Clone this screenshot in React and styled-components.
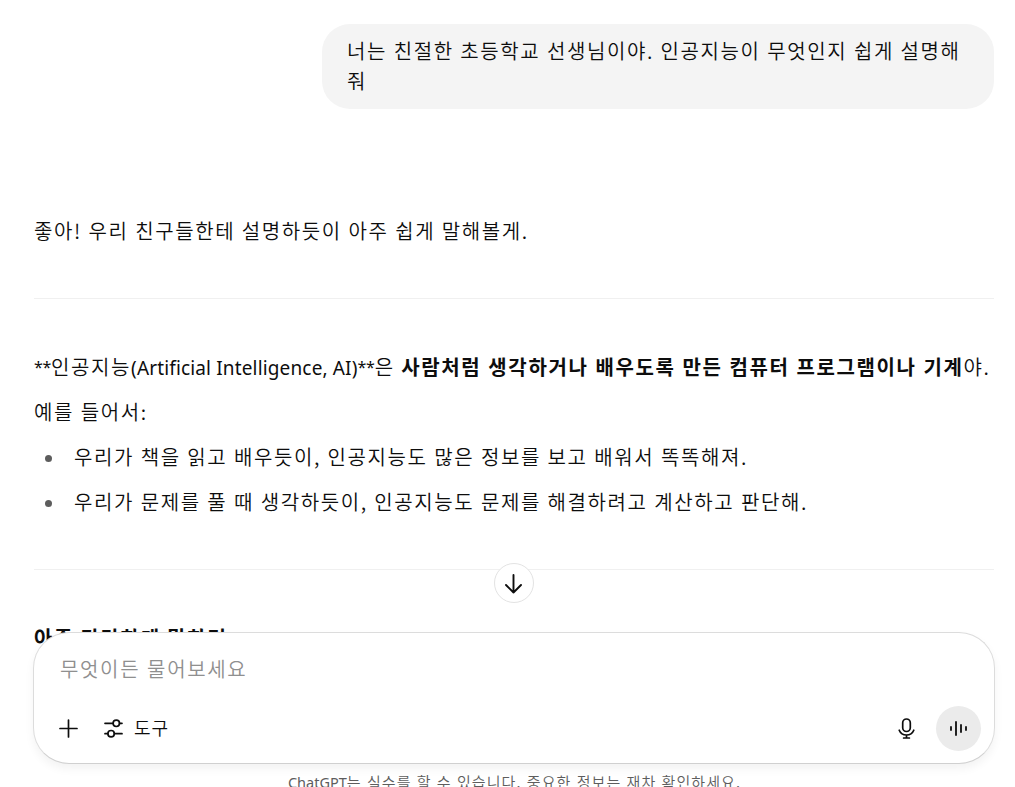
import React from 'react'
import styled, { createGlobalStyle } from 'styled-components'

const GlobalStyle = createGlobalStyle`
  * {
    box-sizing: border-box;
  }
  body {
    margin: 0;
    background: #fff;
    color: #0d0d0d;
    font-family: 'Noto Sans CJK KR', sans-serif;
    overflow: hidden;
  }
`
const Page = styled.div`
  position: relative;
  height: 100vh;
  overflow: hidden;
`
const Thread = styled.main`
  display: flex;
  flex-direction: column;
  padding: 24px 21px 0 34px;
  font-size: 20px;
  font-weight: 350;
  letter-spacing: 1.6px;
  word-spacing: 0.6px;
`
const Bubble = styled.div`
  align-self: flex-end;
  width: 672px;
  padding: 12px 25px 13px;
  border-radius: 28px;
  background: #f4f4f4;
  line-height: 30px;
  word-break: break-all;
`
const Answer = styled.article`
  display: flex;
  flex-direction: column;
  margin-top: 104px;
  line-height: 35px;
  white-space: nowrap;
`
const Text = styled.p`
  margin: ${props => props.$top || 0}px 0 0;
`
const Latin = styled.span`
  font-family: 'Noto Sans', sans-serif;
  font-weight: 400;
  font-size: 19px;
  letter-spacing: ${props => props.$spacing || 0}px;
  word-spacing: 0;
`
const Stars = styled(Latin)`
  font-size: 16px;
  line-height: 1;
  vertical-align: 2px;
  letter-spacing: -0.3px;
`
const Strong = styled.strong`
  font-weight: 700;
  letter-spacing: 1.62px;
  word-spacing: 0.8px;
`
const Rule = styled.hr`
  width: 100%;
  height: 1px;
  margin: 50px 0;
  border: 0;
  background: #f0f0f0;
`
const List = styled.ul`
  display: flex;
  flex-direction: column;
  gap: 10px;
  margin: 10px 0 0;
  padding: 0;
  list-style: none;
`
const Item = styled.li`
  display: flex;
  align-items: center;
  gap: 22px;
  padding-left: 11px;

  &::before {
    content: '';
    width: 7px;
    height: 7px;
    margin-top: 3px;
    border-radius: 50%;
    background: #5d5d5d;
  }
`
const Heading = styled.h3`
  margin: 0;
  font-size: 20px;
  font-weight: 700;
`
const ScrollButton = styled.button`
  position: absolute;
  top: 563px;
  left: 494px;
  display: flex;
  align-items: center;
  justify-content: center;
  width: 40px;
  height: 40px;
  padding: 0;
  border: 1px solid #e3e3e3;
  border-radius: 50%;
  background: #fff;
  color: #0d0d0d;
`
const Dock = styled.div`
  position: absolute;
  top: 632px;
  left: 33px;
  right: 20px;
  display: flex;
  flex-direction: column;
`
const Composer = styled.form`
  display: flex;
  flex-direction: column;
  justify-content: space-between;
  height: 132px;
  padding: 18px 13px 12px 22px;
  border: 1px solid #dcdcdc;
  border-bottom-color: #d0d0d0;
  border-radius: 36px;
  background: #fff;
  box-shadow: 0 5px 10px rgba(0, 0, 0, 0.05);
`
const Placeholder = styled.div`
  padding-left: 4px;
  color: #8f8f8f;
  font-size: 20px;
  font-weight: 350;
  line-height: 35px;
  letter-spacing: 1.65px;
  word-spacing: 0.8px;
`
const Toolbar = styled.div`
  display: flex;
  align-items: center;
  height: 45px;
`
const Tool = styled.button`
  display: flex;
  align-items: center;
  gap: 8px;
  padding: 0;
  margin-left: ${props => props.$left || 0}px;
  border: 0;
  background: none;
  color: #0d0d0d;
`
const ToolLabel = styled.span`
  padding-bottom: 4px;
  font: 350 18px 'Noto Sans CJK KR', sans-serif;
  line-height: 22px;
  letter-spacing: 1px;
`
const Voice = styled.button`
  display: flex;
  align-items: center;
  justify-content: center;
  width: 45px;
  height: 45px;
  margin-left: 17px;
  padding: 0;
  border: 0;
  border-radius: 50%;
  background: #ebebeb;
  color: #0d0d0d;
`
const Spacer = styled.span`
  flex: 1;
`
const Notice = styled.p`
  margin: 8px 0 0;
  padding-left: 1px;
  color: #5d5d5d;
  font-size: 15px;
  font-weight: 350;
  line-height: 20px;
  letter-spacing: 1.08px;
  word-spacing: 0.8px;
  text-align: center;
  white-space: nowrap;
`
const Brand = styled(Latin)`
  font-size: 14.5px;
`

const Icon = ({ size = 25, width = 1.7, children }) => (
  <svg
    width={size}
    height={size}
    viewBox={`0 0 ${size} ${size}`}
    fill='none'
    stroke='currentColor'
    strokeWidth={width}
    strokeLinecap='round'
    strokeLinejoin='round'
  >
    {children}
  </svg>
)

const ArrowDown = () => (
  <Icon width={1.9}>
    <path d='M11.5 4V21.5M4 14L11.5 21.5L19 14' />
  </Icon>
)

const Plus = () => (
  <Icon>
    <path d='M12.5 4V21M4 12.5H21' />
  </Icon>
)

const Sliders = () => (
  <Icon>
    <path d='M4 7.3H12M18.6 7.3H21M4 17.7H6.8M13.4 17.7H21' />
    <circle cx='15.3' cy='7.3' r='3.2' />
    <circle cx='10.1' cy='17.7' r='3.2' />
  </Icon>
)

const Mic = () => (
  <Icon>
    <rect x='8.7' y='3' width='7.6' height='12.5' rx='3.8' />
    <path d='M5.2 14.2C6.4 17.1 9.2 19 12.5 19S18.6 17.1 19.8 14.2M12.5 19V22M9.6 22H15.4' />
  </Icon>
)

const Wave = () => (
  <Icon width={1.8}>
    <path d='M5 11V14M10 6V19M15 9V16M20 11V14' />
  </Icon>
)

const App = () => (
  <Page>
    <GlobalStyle />
    <Thread>
      <Bubble>너는 친절한 초등학교 선생님이야. 인공지능이 무엇인지 쉽게 설명해줘</Bubble>
      <Answer>
        <Text>좋아! 우리 친구들한테 설명하듯이 아주 쉽게 말해볼게.</Text>
        <Rule />
        <Text>
          <Stars>**</Stars>인공지능<Latin $spacing={0.15}>(Artificial Intelligence, AI)</Latin><Stars>**</Stars>은{' '}
          <Strong>사람처럼 생각하거나 배우도록 만든 컴퓨터 프로그램이나 기계</Strong>야.
        </Text>
        <Text $top={8}>예를 들어서:</Text>
        <List>
          <Item>우리가 책을 읽고 배우듯이, 인공지능도 많은 정보를 보고 배워서 똑똑해져.</Item>
          <Item>우리가 문제를 풀 때 생각하듯이, 인공지능도 문제를 해결하려고 계산하고 판단해.</Item>
        </List>
        <Rule />
        <Heading>아주 간단하게 말하면</Heading>
      </Answer>
    </Thread>
    <ScrollButton type='button'>
      <ArrowDown />
    </ScrollButton>
    <Dock>
      <Composer>
        <Placeholder>무엇이든 물어보세요</Placeholder>
        <Toolbar>
          <Tool type='button'><Plus /></Tool>
          <Tool type='button' $left={20}>
            <Sliders />
            <ToolLabel>도구</ToolLabel>
          </Tool>
          <Spacer />
          <Tool type='button'><Mic /></Tool>
          <Voice type='button'><Wave /></Voice>
        </Toolbar>
      </Composer>
      <Notice><Brand>ChatGPT</Brand>는 실수를 할 수 있습니다. 중요한 정보는 재차 확인하세요.</Notice>
    </Dock>
  </Page>
)

export default App
